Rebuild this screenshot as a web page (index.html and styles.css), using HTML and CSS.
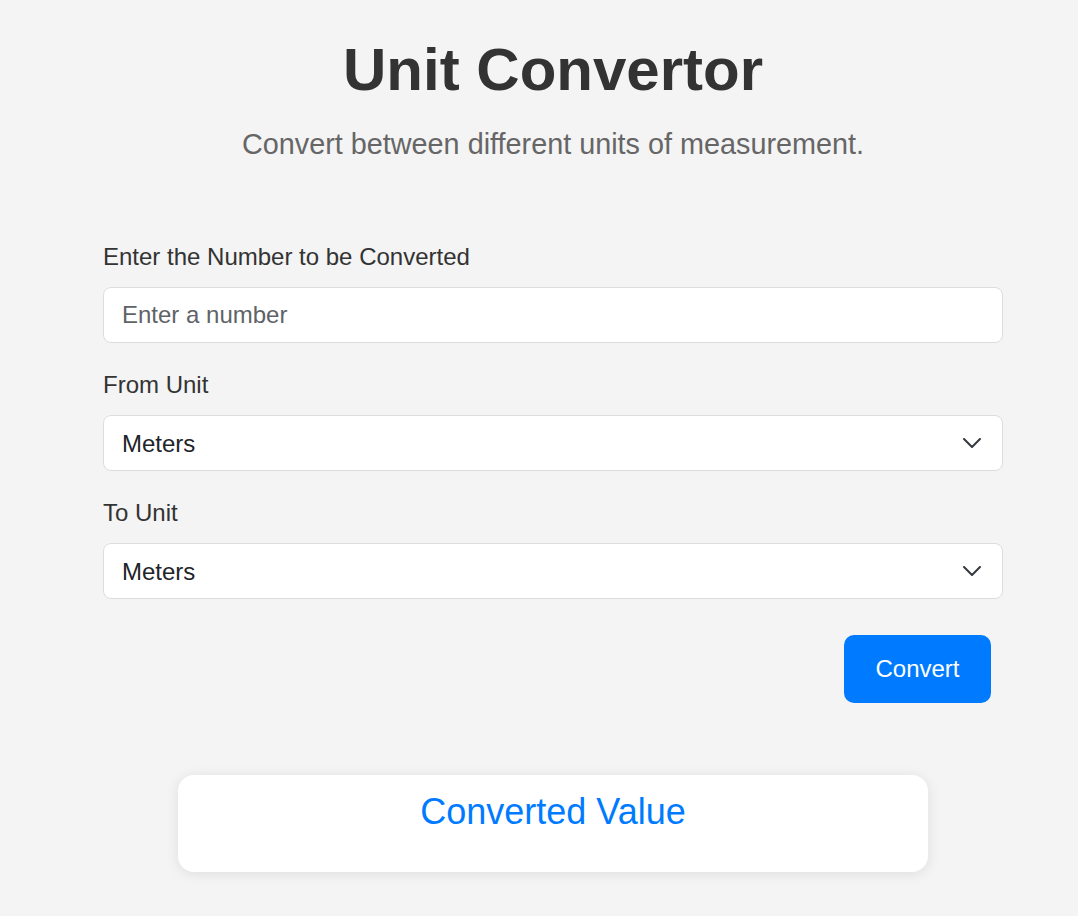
FILE: index.html
```html
<!DOCTYPE html>
<html lang="en">
<head>
<meta charset="utf-8">
<title>Unit Convertor</title>
<link rel="stylesheet" href="styles.css">
</head>
<body>
<div class="page">
  <h1 class="title">Unit Convertor</h1>
  <p class="subtitle">Convert between different units of measurement.</p>

  <form class="form">
    <div class="group">
      <label class="label" for="num">Enter the Number to be Converted</label>
      <input class="field" id="num" type="text" placeholder="Enter a number">
    </div>
    <div class="group">
      <label class="label" for="from">From Unit</label>
      <div class="select-wrap">
        <select class="field select" id="from">
          <option>Meters</option>
          <option>Kilometers</option>
          <option>Centimeters</option>
        </select>
        <svg class="chevron" width="18" height="10" viewBox="0 0 18 10"><path d="M1 1 L9 9 L17 1" fill="none" stroke="#343a40" stroke-width="2" stroke-linecap="round" stroke-linejoin="round"/></svg>
      </div>
    </div>
    <div class="group">
      <label class="label" for="to">To Unit</label>
      <div class="select-wrap">
        <select class="field select" id="to">
          <option>Meters</option>
          <option>Kilometers</option>
          <option>Centimeters</option>
        </select>
        <svg class="chevron" width="18" height="10" viewBox="0 0 18 10"><path d="M1 1 L9 9 L17 1" fill="none" stroke="#343a40" stroke-width="2" stroke-linecap="round" stroke-linejoin="round"/></svg>
      </div>
    </div>
    <div class="actions">
      <button class="btn" type="button">Convert</button>
    </div>
  </form>

  <div class="result">
    <h2 class="result-title">Converted Value</h2>
  </div>
</div>
</body>
</html>
```
FILE: styles.css
```css
* { box-sizing: border-box; }
html, body { margin: 0; padding: 0; }
body {
  background: #f4f4f4;
  font-family: "Liberation Sans", Arial, sans-serif;
  color: #333;
}
.page {
  width: 928px;
  margin: 0 auto;
  padding: 35px 0 40px 28px;
}
.title {
  margin: 0;
  font-size: 60px;
  font-weight: bold;
  line-height: 69px;
  text-align: center;
  color: #333;
}
.subtitle {
  margin: 24px 0 0;
  font-size: 28.8px;
  line-height: 33px;
  text-align: center;
  color: #666;
}
.form {
  margin-top: 82px;
}
.group {
  margin-bottom: 28px;
}
.label {
  display: block;
  font-size: 24px;
  line-height: 28px;
  margin-bottom: 16px;
  color: #333;
}
.field {
  display: block;
  width: 100%;
  height: 56px;
  padding: 0 18px;
  font-family: "Liberation Sans", Arial, sans-serif;
  font-size: 24px;
  color: #212529;
  background: #fff;
  border: 1px solid #dcdde0;
  border-radius: 8px;
  outline: none;
}
.field::placeholder { color: #5f6368; }
.select-wrap { position: relative; }
.select {
  appearance: none;
  -webkit-appearance: none;
  padding-right: 48px;
}
.chevron {
  position: absolute;
  right: 22px;
  top: 23px;
  pointer-events: none;
}
.actions {
  display: flex;
  justify-content: flex-end;
  margin-top: 36px;
  padding-right: 12px;
}
.btn {
  width: 147px;
  height: 68px;
  font-family: "Liberation Sans", Arial, sans-serif;
  font-size: 24px;
  color: #fff;
  background: #007bff;
  border: none;
  border-radius: 10px;
}
.result {
  width: 750px;
  height: 97px;
  margin: 72px auto 0;
  padding-top: 16px;
  background: #fff;
  border-radius: 16px;
  box-shadow: 0 2px 14px rgba(0, 0, 0, 0.09);
  text-align: center;
}
.result-title {
  margin: 0;
  font-size: 36px;
  font-weight: normal;
  line-height: 41px;
  color: #007bff;
}
```
